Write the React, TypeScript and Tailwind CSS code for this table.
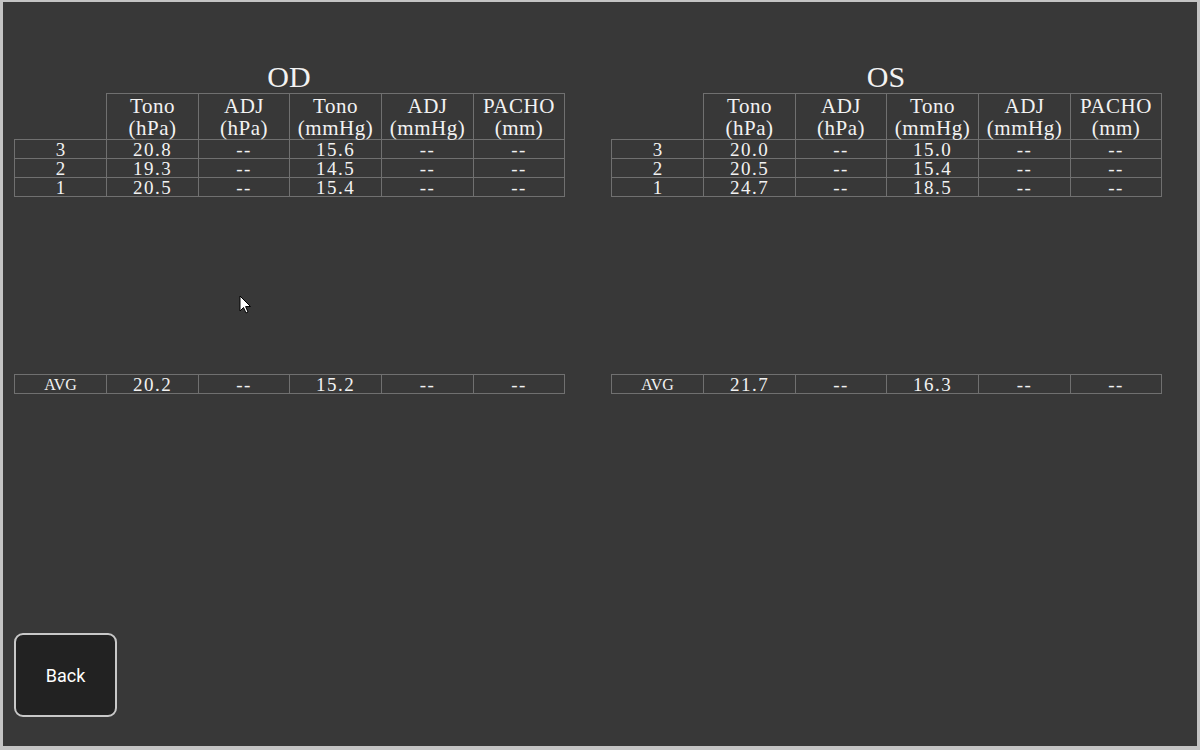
const headers = [
  ["Tono", "(hPa)"],
  ["ADJ", "(hPa)"],
  ["Tono", "(mmHg)"],
  ["ADJ", "(mmHg)"],
  ["PACHO", "(mm)"],
];

interface Eye {
  name: string;
  rows: { label: string; hpa: string; mmhg: string }[];
  avg: { hpa: string; mmhg: string };
}

const eyes: Eye[] = [
  {
    name: "OD",
    rows: [
      { label: "3", hpa: "20.8", mmhg: "15.6" },
      { label: "2", hpa: "19.3", mmhg: "14.5" },
      { label: "1", hpa: "20.5", mmhg: "15.4" },
    ],
    avg: { hpa: "20.2", mmhg: "15.2" },
  },
  {
    name: "OS",
    rows: [
      { label: "3", hpa: "20.0", mmhg: "15.0" },
      { label: "2", hpa: "20.5", mmhg: "15.4" },
      { label: "1", hpa: "24.7", mmhg: "18.5" },
    ],
    avg: { hpa: "21.7", mmhg: "16.3" },
  },
];

const cell = "border border-[#707070] p-0 text-center align-middle";

function DataRow({ label, hpa, mmhg }: { label: string; hpa: string; mmhg: string }) {
  const vals = [hpa, "--", mmhg, "--", "--"];
  const labelSize = label === "AVG" ? "text-[16px]" : "text-[19px]";
  return (
    <tr className="h-[19px]">
      <td className={`${cell} ${labelSize} leading-[17px]`}>{label}</td>
      {vals.map((v, i) => (
        <td key={i} className={`${cell} text-[19px] leading-[17px] tracking-[1.5px]`}>
          {v}
        </td>
      ))}
    </tr>
  );
}

function Cols() {
  return (
    <colgroup>
      <col className="w-[92px]" />
      <col className="w-[92px]" />
      <col className="w-[91px]" />
      <col className="w-[92px]" />
      <col className="w-[92px]" />
      <col className="w-[91px]" />
    </colgroup>
  );
}

function EyeTable({ eye }: { eye: Eye }) {
  return (
    <div className="flex w-[550px] flex-col">
      <div className="flex h-[32px] items-end justify-center text-[30px] leading-[32px]">{eye.name}</div>
      <table className="w-[550px] table-fixed border-collapse">
        <Cols />
        <thead>
          <tr className="h-[46px]">
            <th className="p-0" />
            {headers.map((h, i) => (
              <th key={i} className={`${cell} font-normal text-[21px] leading-[22px] tracking-[0.5px]`}>
                {h[0]}
                <br />
                {h[1]}
              </th>
            ))}
          </tr>
        </thead>
        <tbody>
          {eye.rows.map((r) => (
            <DataRow key={r.label} {...r} />
          ))}
        </tbody>
      </table>
      <table className="mt-[177px] w-[550px] table-fixed border-collapse">
        <Cols />
        <tbody>
          <DataRow label="AVG" hpa={eye.avg.hpa} mmhg={eye.avg.mmhg} />
        </tbody>
      </table>
    </div>
  );
}

export default function App() {
  return (
    <div className="relative h-[750px] w-[1200px] overflow-hidden border-x-[3px] border-t-2 border-b-4 border-[#c4c4c4] bg-[#383838] text-[#f2f2f2] [font-family:'Liberation_Serif',serif]">
      <div className="flex gap-[47px] pl-[11px] pt-[59px]">
        {eyes.map((e) => (
          <EyeTable key={e.name} eye={e} />
        ))}
      </div>

      <button className="absolute left-[11px] top-[631px] flex h-[84px] w-[103px] items-center justify-center rounded-[9px] border-2 border-[#c8c8c8] bg-[#222222] text-[18px] text-white [font-family:Roboto,sans-serif]">
        Back
      </button>

      {/* mouse pointer */}
      <svg className="absolute left-[236px] top-[293px]" width="14" height="20" viewBox="0 0 14 20">
        <path d="M1 1 L1 16 L4.5 12.5 L7 18 L9 17 L6.6 11.6 L11.5 11.5 Z" fill="#fff" stroke="#000" strokeWidth="1" />
      </svg>
    </div>
  );
}
